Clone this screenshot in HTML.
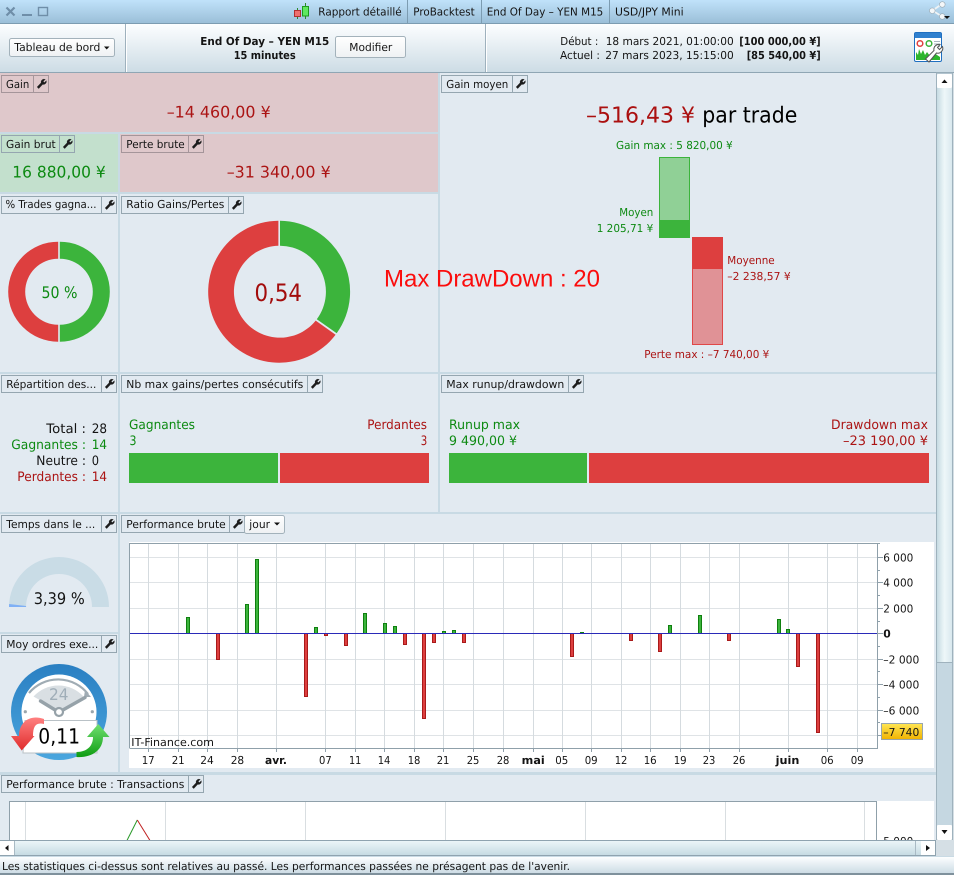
<!DOCTYPE html>
<html lang="fr"><head><meta charset="utf-8"><title>Rapport détaillé</title>
<style>
html,body{margin:0;padding:0;background:#d5dfe5;width:954px;height:875px;overflow:hidden}
svg{display:block}
text{font-family:"DejaVu Sans","Liberation Sans",sans-serif;font-size:11px;fill:#141414;white-space:pre;text-rendering:geometricPrecision}
.b{font-weight:bold}.g{fill:#0d8a12}.r{fill:#ab1414}
.v{font-size:16px}.m{font-size:13px}.lab{fill:none;stroke:#95a6b0}.labr{fill:none;stroke:#a5959a}
.grid{stroke:#dfe3e6;stroke-width:1}.vg{stroke:#d5dbdf;stroke-width:1}
.bg{fill:#3cb43c;stroke:#0f7f0f}.br{fill:#dd3f3f;stroke:#a91a1a}
.c{text-anchor:middle}
</style></head><body>
<svg width="954" height="875" viewBox="0 0 954 875" xmlns="http://www.w3.org/2000/svg">
<defs>
<linearGradient id="tb" x1="0" y1="0" x2="0" y2="1"><stop offset="0" stop-color="#c0e2fa"/><stop offset="1" stop-color="#9bbfd8"/></linearGradient>
<linearGradient id="tl" x1="0" y1="0" x2="0" y2="1"><stop offset="0" stop-color="#fcfeff"/><stop offset="1" stop-color="#cddce5"/></linearGradient>
<linearGradient id="btn" x1="0" y1="0" x2="0" y2="1"><stop offset="0" stop-color="#ffffff"/><stop offset="1" stop-color="#eef1f3"/></linearGradient>
<linearGradient id="sv" x1="0" y1="0" x2="1" y2="0"><stop offset="0" stop-color="#c6dbe3"/><stop offset=".5" stop-color="#eef7f9"/><stop offset="1" stop-color="#d9e8ee"/></linearGradient>
<linearGradient id="sh" x1="0" y1="0" x2="0" y2="1"><stop offset="0" stop-color="#eef7f9"/><stop offset="1" stop-color="#c6dbe3"/></linearGradient>
<linearGradient id="yl" x1="0" y1="0" x2="0" y2="1"><stop offset="0" stop-color="#ffe654"/><stop offset="1" stop-color="#f0b200"/></linearGradient>
<linearGradient id="rg" x1="0" y1="0" x2="0" y2="1"><stop offset="0" stop-color="#ff8080"/><stop offset="1" stop-color="#e02c2c"/></linearGradient>
<linearGradient id="gg" x1="0" y1="0" x2="0" y2="1"><stop offset="0" stop-color="#70e070"/><stop offset="1" stop-color="#0e9c12"/></linearGradient>
<linearGradient id="ring" x1="0" y1="0" x2="0" y2="1"><stop offset="0" stop-color="#2a7fc2"/><stop offset="1" stop-color="#4aa6de"/></linearGradient>
<g id="w"><path d="M.6 8L4.6 3.800A3 3 0 0 1 8.800.4L6.800 2.400 7.800 3.600 9.800 1.600A3 3 0 0 1 6.200 5.400L2.200 9.600Z" fill="#1c1c1c" stroke="#1c1c1c" stroke-width=".3"/></g>
</defs>

<!-- base -->
<rect width="954" height="875" fill="#c8dae4"/>
<g fill="#e2eaf1">
<rect x="440" y="73" width="496" height="299"/>
<rect x="0" y="194" width="118" height="178"/><rect x="120" y="194" width="318" height="178"/>
<rect x="0" y="374" width="118" height="138"/><rect x="120" y="374" width="318" height="138"/><rect x="440" y="374" width="496" height="138"/>
<rect x="0" y="514" width="118" height="118"/><rect x="0" y="634" width="118" height="138"/><rect x="120" y="514" width="816" height="258"/>
<rect x="0" y="775" width="936" height="70"/>
</g>
<rect x="0" y="73" width="438" height="59" fill="#dfc8cb"/>
<rect x="0" y="134" width="118" height="58" fill="#c3e0cd"/>
<rect x="120" y="134" width="318" height="58" fill="#dfc8cb"/>

<!-- title bar -->
<rect width="954" height="23" fill="url(#tb)"/>
<rect y="23" width="954" height="1" fill="#7c9cb1"/>
<g stroke="#6f8ea8" fill="none"><path d="M6.500 7.500L14.500 15.500M14.500 7.500L6.500 15.500" stroke-width="2.200"/><path d="M22 15H32" stroke-width="2"/><rect x="38.500" y="7.500" width="9" height="8" stroke-width="1.400"/></g>
<g stroke="#7c9cb1"><path d="M407.500 0V23M481.500 0V23M609.500 0V23"/></g>
<path d="M297.500 8V19M305.500 3V19" stroke="#2a8a2a"/>
<rect x="294.500" y="10.500" width="6" height="6" fill="#ef6f6f" stroke="#b03030"/>
<rect x="302.500" y="6.500" width="6" height="9.500" fill="#5fe85f" stroke="#1e9a1e"/>
<text x="318.300" y="15.500" textLength="83.400" lengthAdjust="spacingAndGlyphs">Rapport détaillé</text>
<text x="413.300" y="15.500" textLength="61.400" lengthAdjust="spacingAndGlyphs">ProBacktest</text>
<text x="486.700" y="15.500" textLength="116.600" lengthAdjust="spacingAndGlyphs">End Of Day – YEN M15</text>
<text x="615" y="15.500" textLength="68.700" lengthAdjust="spacingAndGlyphs">USD/JPY Mini</text>
<!-- share -->
<g fill="#f4f7f9" stroke="#9aa7b0" stroke-width=".6"><path d="M942 4L932.500 10.500 942 16.500" fill="none" stroke="#eef3f6" stroke-width="1.800"/><circle cx="942.300" cy="4.500" r="2.800"/><circle cx="932.300" cy="10.700" r="2.800"/><circle cx="942.300" cy="16.500" r="2.800"/></g>
<path d="M944 16H950L947 19Z" fill="#111"/>

<!-- toolbar -->
<rect y="24" width="954" height="48" fill="url(#tl)"/>
<rect y="72" width="954" height="1" fill="#8fa6b4"/>
<path d="M125.500 24V72M485.500 24V72" stroke="#9eb1bd"/><path d="M126.500 24V72M486.500 24V72" stroke="#fff"/>
<rect x="9.500" y="38.500" width="105" height="18" rx="2" fill="url(#btn)" stroke="#a3b2bb"/>
<text x="14.300" y="51" textLength="86" lengthAdjust="spacingAndGlyphs">Tableau de bord</text>
<path d="M104 46.500H109.500L106.700 49.500Z" fill="#111"/>
<text class="b" x="200.300" y="45" textLength="129" lengthAdjust="spacingAndGlyphs">End Of Day – YEN M15</text>
<text class="b" x="233.700" y="59" textLength="62" lengthAdjust="spacingAndGlyphs">15 minutes</text>
<rect x="335.500" y="36.500" width="70" height="21" rx="2" fill="url(#btn)" stroke="#a3b2bb"/>
<text x="349.300" y="51" textLength="43" lengthAdjust="spacingAndGlyphs">Modifier</text>
<text x="560.300" y="45" textLength="38" lengthAdjust="spacingAndGlyphs">Début :</text>
<text x="605.700" y="45" textLength="128" lengthAdjust="spacingAndGlyphs">18 mars 2021, 01:00:00</text>
<text class="b" x="739.300" y="45" textLength="81.400" lengthAdjust="spacingAndGlyphs">[100 000,00 ¥]</text>
<text x="560" y="59" textLength="40" lengthAdjust="spacingAndGlyphs">Actuel :</text>
<text x="605.300" y="59" textLength="128.400" lengthAdjust="spacingAndGlyphs">27 mars 2023, 15:15:00</text>
<text class="b" x="746.700" y="59" textLength="74" lengthAdjust="spacingAndGlyphs">[85 540,00 ¥]</text>
<!-- config icon -->
<rect x="914.500" y="32.500" width="27" height="29" rx="1.500" fill="#fff" stroke="#1f6fc0"/>
<rect x="915" y="33" width="26" height="5" fill="#2f80cf"/>
<circle cx="920" cy="43.500" r="2.800" fill="none" stroke="#e04040" stroke-width="1.500"/>
<circle cx="929" cy="43.500" r="2.800" fill="none" stroke="#3cb43c" stroke-width="1.500"/>
<path d="M934 41.500H940M934 44H940M934 46.500H940" stroke="#aab6c0"/>
<path d="M916 60V52L918 55 919 49 921 54 923 50 925 55 927 52 930 56 934 53 940 57V60Z" fill="#2db52d"/>
<path d="M925.500 59L934 50.500A5 5 0 0 1 940 44.500L937.500 47.500 939.500 49.500 942.500 46.500A5 5 0 0 1 936.500 53L929 62Z" fill="#fff" stroke="#555" stroke-width="1"/>

<!-- panel 1 -->
<rect class="labr" x="1.500" y="75.500" width="47" height="17"/><path class="labr" d="M33.500 75.500V92.500"/>
<text x="6" y="88" textLength="23.300" lengthAdjust="spacingAndGlyphs">Gain</text><use href="#w" x="36.500" y="79"/>
<text class="v r" x="166.700" y="117.500" textLength="104" lengthAdjust="spacingAndGlyphs">–14 460,00 ¥</text>

<rect class="lab" x="1.500" y="135.500" width="73" height="17"/><path class="lab" d="M59.500 135.500V152.500"/>
<text x="6" y="148" textLength="49.700" lengthAdjust="spacingAndGlyphs">Gain brut</text><use href="#w" x="62.500" y="139"/>
<text class="v g" x="12.300" y="177.700" textLength="93.400" lengthAdjust="spacingAndGlyphs">16 880,00 ¥</text>

<rect class="labr" x="121.500" y="135.500" width="82" height="17"/><path class="labr" d="M188.500 135.500V152.500"/>
<text x="126.300" y="148" textLength="58.400" lengthAdjust="spacingAndGlyphs">Perte brute</text><use href="#w" x="191.500" y="139"/>
<text class="v r" x="226.700" y="177.700" textLength="104" lengthAdjust="spacingAndGlyphs">–31 340,00 ¥</text>

<!-- gain moyen -->
<rect class="lab" x="441.500" y="75.500" width="86" height="17"/><path class="lab" d="M512.500 75.500V92.500"/>
<text x="446.300" y="88" textLength="62" lengthAdjust="spacingAndGlyphs">Gain moyen</text><use href="#w" x="515.500" y="79"/>
<text x="586" y="122.700" style="font-size:22px;fill:#ab1010" textLength="109" lengthAdjust="spacingAndGlyphs">–516,43 ¥</text>
<text x="702.300" y="122.700" style="font-size:22px;fill:#000" textLength="95" lengthAdjust="spacingAndGlyphs">par trade</text>
<text class="g" x="616" y="149" textLength="116.700" lengthAdjust="spacingAndGlyphs">Gain max : 5 820,00 ¥</text>
<rect x="659.500" y="157.500" width="30" height="80" fill="#90d096" stroke="#3cb43c"/>
<rect x="659" y="220" width="31" height="18" fill="#3cb43c"/>
<rect x="692.500" y="237.500" width="30" height="107" fill="#e09296" stroke="#e04848"/>
<rect x="692" y="237" width="31" height="32" fill="#dd3f3f"/>
<text class="g" x="619.300" y="216" textLength="34" lengthAdjust="spacingAndGlyphs">Moyen</text>
<text class="g" x="596.700" y="232" textLength="56.600" lengthAdjust="spacingAndGlyphs">1 205,71 ¥</text>
<text class="r" x="727.300" y="264" textLength="47.400" lengthAdjust="spacingAndGlyphs">Moyenne</text>
<text class="r" x="727.300" y="280" textLength="63.400" lengthAdjust="spacingAndGlyphs">–2 238,57 ¥</text>
<text class="r" x="644.300" y="358" textLength="125" lengthAdjust="spacingAndGlyphs">Perte max : –7 740,00 ¥</text>

<!-- donuts -->
<rect class="lab" x="1.500" y="196.500" width="115" height="17"/><path class="lab" d="M101.500 196.500V213.500"/>
<text x="5.500" y="208" textLength="91" lengthAdjust="spacingAndGlyphs">% Trades gagna...</text><use href="#w" x="104.500" y="200"/>
<rect class="lab" x="121.500" y="196.500" width="122" height="17"/><path class="lab" d="M228.500 196.500V213.500"/>
<text x="126.300" y="208" textLength="98" lengthAdjust="spacingAndGlyphs">Ratio Gains/Pertes</text><use href="#w" x="231.500" y="200"/>
<path d="M59.800 241.700A50 50 0 0 1 59.800 341.700V324.700A33 33 0 0 0 59.800 258.700Z" fill="#3cb43c"/>
<path d="M58.200 241.700A50 50 0 0 0 58.200 341.700V324.700A33 33 0 0 1 58.200 258.700Z" fill="#dd3f3f"/>
<text class="v g" x="41.500" y="298" textLength="36" lengthAdjust="spacingAndGlyphs">50 %</text>
<path d="M280 220.700A71 71 0 0 1 336.700 333.200L316.800 319.200A46 46 0 0 0 280 245.700Z" fill="#3cb43c"/>
<path d="M278.400 220.700A71 71 0 1 0 335.600 334.800L315.700 320.600A46 46 0 1 1 278.400 245.700Z" fill="#dd3f3f"/>
<text x="254.500" y="301" style="font-size:24px;fill:#a30c0c" textLength="47.500" lengthAdjust="spacingAndGlyphs">0,54</text>
<text x="384" y="286.500" style="font-family:'Liberation Sans',Arial,sans-serif;font-size:24px;fill:#fb0d0d" textLength="216" lengthAdjust="spacingAndGlyphs">Max DrawDown : 20</text>

<!-- row 3 -->
<rect class="lab" x="1.500" y="375.500" width="115" height="17"/><path class="lab" d="M101.500 375.500V392.500"/>
<text x="6.300" y="388" textLength="90" lengthAdjust="spacingAndGlyphs">Répartition des...</text><use href="#w" x="104.500" y="379"/>
<rect class="lab" x="121.500" y="375.500" width="201" height="17"/><path class="lab" d="M307.500 375.500V392.500"/>
<text x="126.300" y="388" textLength="177" lengthAdjust="spacingAndGlyphs">Nb max gains/pertes consécutifs</text><use href="#w" x="310.500" y="379"/>
<rect class="lab" x="441.500" y="375.500" width="142" height="17"/><path class="lab" d="M568.500 375.500V392.500"/>
<text x="446.300" y="388" textLength="118" lengthAdjust="spacingAndGlyphs">Max runup/drawdown</text><use href="#w" x="571.500" y="379"/>

<g class="m">
<text class="m" x="46.300" y="433" textLength="39.700" lengthAdjust="spacingAndGlyphs">Total :</text><text class="m" x="91.700" y="433" textLength="15.300" lengthAdjust="spacingAndGlyphs">28</text>
<text class="m g" x="11.300" y="449" textLength="74.700" lengthAdjust="spacingAndGlyphs">Gagnantes :</text><text class="m g" x="91.700" y="449" textLength="15.300" lengthAdjust="spacingAndGlyphs">14</text>
<text class="m" x="36.300" y="465" textLength="49.700" lengthAdjust="spacingAndGlyphs">Neutre :</text><text class="m" x="91.700" y="465" textLength="7.300" lengthAdjust="spacingAndGlyphs">0</text>
<text class="m r" x="17.300" y="481" textLength="68.700" lengthAdjust="spacingAndGlyphs">Perdantes :</text><text class="m r" x="91.700" y="481" textLength="15.300" lengthAdjust="spacingAndGlyphs">14</text>
<text class="m g" x="129" y="429" textLength="66" lengthAdjust="spacingAndGlyphs">Gagnantes</text><text class="m g" x="129.500" y="445" textLength="7" lengthAdjust="spacingAndGlyphs">3</text>
<text class="m r" x="367.300" y="429" textLength="59.700" lengthAdjust="spacingAndGlyphs">Perdantes</text><text class="m r" x="420.700" y="445" textLength="6.500" lengthAdjust="spacingAndGlyphs">3</text>
<text class="m g" x="449" y="429" textLength="71" lengthAdjust="spacingAndGlyphs">Runup max</text><text class="m g" x="449" y="445" textLength="68" lengthAdjust="spacingAndGlyphs">9 490,00 ¥</text>
<text class="m r" x="831" y="429" textLength="97" lengthAdjust="spacingAndGlyphs">Drawdown max</text><text class="m r" x="843" y="445" textLength="85" lengthAdjust="spacingAndGlyphs">–23 190,00 ¥</text>
</g>
<rect x="129" y="453" width="149" height="30" fill="#3cb43c"/><rect x="280" y="453" width="149" height="30" fill="#dd3f3f"/>
<rect x="449" y="453" width="138" height="30" fill="#3cb43c"/><rect x="589" y="453" width="340" height="30" fill="#dd3f3f"/>

<!-- left col row 4 -->
<rect class="lab" x="1.500" y="515.500" width="115" height="17"/><path class="lab" d="M101.500 515.500V532.500"/>
<text x="6.300" y="528" textLength="89" lengthAdjust="spacingAndGlyphs">Temps dans le ...</text><use href="#w" x="104.500" y="519"/>
<path d="M9 607A50 50 0 0 1 109 607H92A33 33 0 0 0 26 607Z" fill="#c9dce6"/>
<path d="M9.100 604L26.100 606L26 607H9Z" fill="#7fb0f5"/>
<text class="v" x="33.700" y="604" textLength="51" lengthAdjust="spacingAndGlyphs">3,39 %</text>
<rect class="lab" x="1.500" y="635.500" width="115" height="17"/><path class="lab" d="M101.500 635.500V652.500"/>
<text x="6.300" y="648" textLength="92" lengthAdjust="spacingAndGlyphs">Moy ordres exe...</text><use href="#w" x="104.500" y="639"/>
<!-- clock -->
<circle cx="59" cy="712" r="48" fill="url(#ring)"/><circle cx="59" cy="712" r="37.500" fill="#fff"/>
<path d="M33.500 696.500A34 34 0 0 1 83.500 696.500L59 711Z" fill="#d9dfe3"/>
<path d="M29 693A38 38 0 0 1 88 694" fill="none" stroke="#a0acb4" stroke-width="2.200"/>
<path d="M85 690L91 697 84 697Z" fill="#a0acb4"/>
<text x="49" y="700" style="font-size:16px;fill:#a0aeb8" textLength="19.500" lengthAdjust="spacingAndGlyphs">24</text>
<path d="M40.500 701L56 710.500M85 697.500L62 710.500" stroke="#96a2a9" stroke-width="3.400" stroke-linecap="round"/>
<circle cx="59" cy="712" r="4" fill="#fff" stroke="#96a2a9" stroke-width="2.200"/>
<circle cx="25.300" cy="711.700" r="1.600" fill="#9aa6ad"/><circle cx="92.300" cy="711.700" r="1.600" fill="#9aa6ad"/>
<path d="M25 720.500H97V753H23Z" fill="#fff" stroke="#b9c1c6"/>
<text x="38.300" y="743.500" style="font-size:21px;fill:#000" textLength="41.700" lengthAdjust="spacingAndGlyphs">0,11</text>
<path d="M44 724C36 722 33 726 33 736H34.500L21.700 750.500 11 736H19C19 722 30 714 44 719Z" fill="url(#rg)"/>
<path d="M98.300 724L109.500 737H103C103 750 92 758 76.500 757V752C87 752 93 746 93 737H87Z" fill="url(#gg)"/>

<!-- perf chart -->
<rect class="lab" x="121.500" y="515.500" width="123" height="17"/><path class="lab" d="M229.500 515.500V532.500"/>
<text x="126.300" y="528" textLength="99.400" lengthAdjust="spacingAndGlyphs">Performance brute</text><use href="#w" x="232.500" y="519"/>
<rect x="244.500" y="515.500" width="40" height="18" rx="2" fill="url(#btn)" stroke="#a3b2bb"/>
<text x="249.300" y="528" textLength="20.700" lengthAdjust="spacingAndGlyphs">jour</text>
<path d="M274 522.500H280L277 525.500Z" fill="#111"/>

<rect x="129" y="542" width="805" height="226" fill="#fff"/>
<g class="grid">
<path d="M129 557.500H877M129 582.500H877M129 608.500H877M129 659.500H877M129 684.500H877M129 710.500H877M129 735.500H877"/></g>
<g class="vg"><path d="M148.500 543V748M178.500 543V748M207.500 543V748M237.500 543V748M276.500 543V748M325.500 543V748M355.500 543V748M384.500 543V748M414.500 543V748M443.500 543V748M473.500 543V748M503.500 543V748M533.500 543V748M562.500 543V748M591.500 543V748M621.500 543V748M650.500 543V748M680.500 543V748M709.500 543V748M739.500 543V748M788.500 543V748M827.500 543V748M857.500 543V748"/></g>
<g>
<rect class="bg" x="186.500" y="617.500" width="3" height="16"/><rect class="br" x="216.500" y="633.500" width="3" height="26"/>
<rect class="bg" x="245.500" y="604.500" width="3" height="29"/><rect class="bg" x="255.500" y="559.500" width="3" height="74"/>
<rect class="br" x="304.500" y="633.500" width="3" height="63"/><rect class="bg" x="314.500" y="627.500" width="3" height="6"/>
<rect class="br" x="324.500" y="633.500" width="3" height="2"/><rect class="br" x="344.500" y="633.500" width="3" height="12"/>
<rect class="bg" x="363.500" y="613.500" width="3" height="20"/><rect class="bg" x="383.500" y="623.500" width="3" height="10"/>
<rect class="bg" x="393.500" y="626.500" width="3" height="7"/><rect class="br" x="403.500" y="633.500" width="3" height="11"/>
<rect class="br" x="422.500" y="633.500" width="3" height="85"/><rect class="br" x="432.500" y="633.500" width="3" height="9"/>
<rect class="bg" x="442.500" y="631.500" width="3" height="2"/><rect class="bg" x="452.500" y="630.500" width="3" height="3"/>
<rect class="br" x="462.500" y="633.500" width="3" height="9"/><rect class="br" x="570.500" y="633.500" width="3" height="23"/>
<rect class="bg" x="580.500" y="632.500" width="3" height="1"/><rect class="br" x="629.500" y="633.500" width="3" height="7"/>
<rect class="br" x="658.500" y="633.500" width="3" height="18"/><rect class="bg" x="668.500" y="625.500" width="3" height="8"/>
<rect class="bg" x="698.500" y="615.500" width="3" height="18"/><rect class="br" x="727.500" y="633.500" width="3" height="7"/>
<rect class="bg" x="777.500" y="619.500" width="3" height="14"/><rect class="bg" x="786.500" y="629.500" width="3" height="4"/>
<rect class="br" x="796.500" y="633.500" width="3" height="33"/><rect class="br" x="816.500" y="633.500" width="3" height="99"/>
</g>
<path d="M129 633.500H877" stroke="#2a2ab8"/>
<path d="M129.500 748V543.500H877.500V748.500H129.500" fill="none" stroke="#8fa0aa"/>
<path d="M877 557.500H883M877 582.500H883M877 608.500H883M877 633.500H883M877 659.500H883M877 684.500H883M877 710.500H883M877 735.500H883M877 543.500H880M877 570.500H880M877 595.500H880M877 621.500H880M877 646.500H880M877 671.500H880M877 697.500H880M877 722.500H880" stroke="#8fa0aa"/>
<path d="M148.500 748V752M178.500 748V752M207.500 748V752M237.500 748V752M276.500 748V752M325.500 748V752M355.500 748V752M384.500 748V752M414.500 748V752M443.500 748V752M473.500 748V752M503.500 748V752M533.500 748V752M562.500 748V752M591.500 748V752M621.500 748V752M650.500 748V752M680.500 748V752M709.500 748V752M739.500 748V752M788.500 748V752M827.500 748V752M857.500 748V752" stroke="#8fa0aa"/>
<text x="131.300" y="746" textLength="82.700" lengthAdjust="spacingAndGlyphs">IT-Finance.com</text>
<g>
<text x="141.700" y="764" textLength="13" lengthAdjust="spacingAndGlyphs">17</text>
<text x="171.700" y="764" textLength="13" lengthAdjust="spacingAndGlyphs">21</text>
<text x="200.300" y="764" textLength="13.500" lengthAdjust="spacingAndGlyphs">24</text>
<text x="230.700" y="764" textLength="13.500" lengthAdjust="spacingAndGlyphs">28</text>
<text class="b" x="265" y="764" textLength="22" lengthAdjust="spacingAndGlyphs">avr.</text>
<text x="319" y="764" textLength="12.700" lengthAdjust="spacingAndGlyphs">07</text>
<text x="349" y="764" textLength="12.300" lengthAdjust="spacingAndGlyphs">11</text>
<text x="377.700" y="764" textLength="12.700" lengthAdjust="spacingAndGlyphs">14</text>
<text x="407.700" y="764" textLength="12.700" lengthAdjust="spacingAndGlyphs">18</text>
<text x="436.700" y="764" textLength="12.700" lengthAdjust="spacingAndGlyphs">21</text>
<text x="466.700" y="764" textLength="12.700" lengthAdjust="spacingAndGlyphs">25</text>
<text x="496.700" y="764" textLength="12.700" lengthAdjust="spacingAndGlyphs">28</text>
<text class="b" x="521.700" y="764" textLength="23" lengthAdjust="spacingAndGlyphs">mai</text>
<text x="555.300" y="764" textLength="13" lengthAdjust="spacingAndGlyphs">05</text>
<text x="584.700" y="764" textLength="13" lengthAdjust="spacingAndGlyphs">09</text>
<text x="614.700" y="764" textLength="12.700" lengthAdjust="spacingAndGlyphs">12</text>
<text x="643.700" y="764" textLength="13" lengthAdjust="spacingAndGlyphs">16</text>
<text x="673.700" y="764" textLength="13" lengthAdjust="spacingAndGlyphs">19</text>
<text x="702.700" y="764" textLength="12.700" lengthAdjust="spacingAndGlyphs">23</text>
<text x="732.700" y="764" textLength="12.700" lengthAdjust="spacingAndGlyphs">26</text>
<text class="b" x="775.700" y="764" textLength="23.700" lengthAdjust="spacingAndGlyphs">juin</text>
<text x="820.700" y="764" textLength="13" lengthAdjust="spacingAndGlyphs">06</text>
<text x="850.700" y="764" textLength="13" lengthAdjust="spacingAndGlyphs">09</text>
</g>
<g>
<text x="883.300" y="561.500" textLength="30" lengthAdjust="spacingAndGlyphs">6 000</text>
<text x="883.300" y="586.500" textLength="30" lengthAdjust="spacingAndGlyphs">4 000</text>
<text x="883.300" y="612.500" textLength="30" lengthAdjust="spacingAndGlyphs">2 000</text>
<text class="b" x="883.300" y="637.500" textLength="7.500" lengthAdjust="spacingAndGlyphs">0</text>
<text x="883.300" y="663.500" textLength="36" lengthAdjust="spacingAndGlyphs">–2 000</text>
<text x="883.300" y="688.500" textLength="36" lengthAdjust="spacingAndGlyphs">–4 000</text>
<text x="883.300" y="714.500" textLength="36" lengthAdjust="spacingAndGlyphs">–6 000</text>
</g>
<rect x="881.500" y="723.500" width="41" height="16" fill="url(#yl)" stroke="#97a5ae"/>
<text x="883.300" y="736" textLength="36" lengthAdjust="spacingAndGlyphs">–7 740</text>

<!-- transactions -->
<rect class="lab" x="1.500" y="775.500" width="202" height="17"/><path class="lab" d="M188.500 775.500V792.500"/>
<text x="6.300" y="788" textLength="178" lengthAdjust="spacingAndGlyphs">Performance brute : Transactions</text><use href="#w" x="191.500" y="779"/>
<rect x="9" y="801" width="925" height="44" fill="#fff"/>
<path d="M25.500 801V845M165.500 801V845M305.500 801V845M445.500 801V845M585.500 801V845M725.500 801V845M864.500 801V845" stroke="#d9dee1"/>
<path d="M9.500 845V801.500H876.500V845" fill="none" stroke="#8fa0aa"/>
<path d="M126.700 841L137.300 820" stroke="#2a9a2a" fill="none"/><path d="M137.300 820L150.300 841" stroke="#c02020" fill="none"/>
<text x="883.300" y="845" textLength="30" lengthAdjust="spacingAndGlyphs">5 000</text>

<!-- v scrollbar -->
<rect x="936" y="73" width="18" height="767" fill="#d5dfe5"/>
<rect x="936.500" y="73" width="16" height="767" fill="#c5d7e1" stroke="#9fb2bd"/>
<rect x="937" y="88" width="15" height="574" fill="url(#sv)"/>
<path d="M937 662.500H952" stroke="#9fb2bd"/>
<rect x="937" y="74" width="15" height="14" rx="1" fill="#fff"/><path d="M941.500 83H947.500L944.500 79.500Z" fill="#111"/>
<rect x="937" y="825" width="15" height="15" rx="1" fill="#fff"/><path d="M941.500 830H947.500L944.500 834Z" fill="#111"/>

<!-- h scrollbar + status -->
<rect x="0" y="840" width="954" height="16" fill="#d5dfe5"/>
<rect x="0" y="840" width="936" height="15" fill="url(#sh)"/>
<path d="M0 840.500H936M0 855.500H936" stroke="#8fa3af"/>
<rect x="0" y="841" width="14" height="14" fill="#fff"/><path d="M14.500 841V855" stroke="#a9bac4"/><path d="M8.500 845V851L5 848Z" fill="#111"/>
<path d="M915.500 841V855" stroke="#a9bac4"/>
<rect x="921" y="841" width="14" height="14" fill="#fff"/><path d="M926 845V851L930 848Z" fill="#111"/><path d="M935.500 840V856" stroke="#8fa3af"/>
<rect x="0" y="857" width="954" height="16" fill="url(#tl)"/>
<rect x="0" y="873" width="954" height="2" fill="#7f919c"/>
<text x="2" y="870" textLength="568" lengthAdjust="spacingAndGlyphs">Les statistiques ci-dessus sont relatives au passé. Les performances passées ne présagent pas de l'avenir.</text>
</svg>
</body></html>
